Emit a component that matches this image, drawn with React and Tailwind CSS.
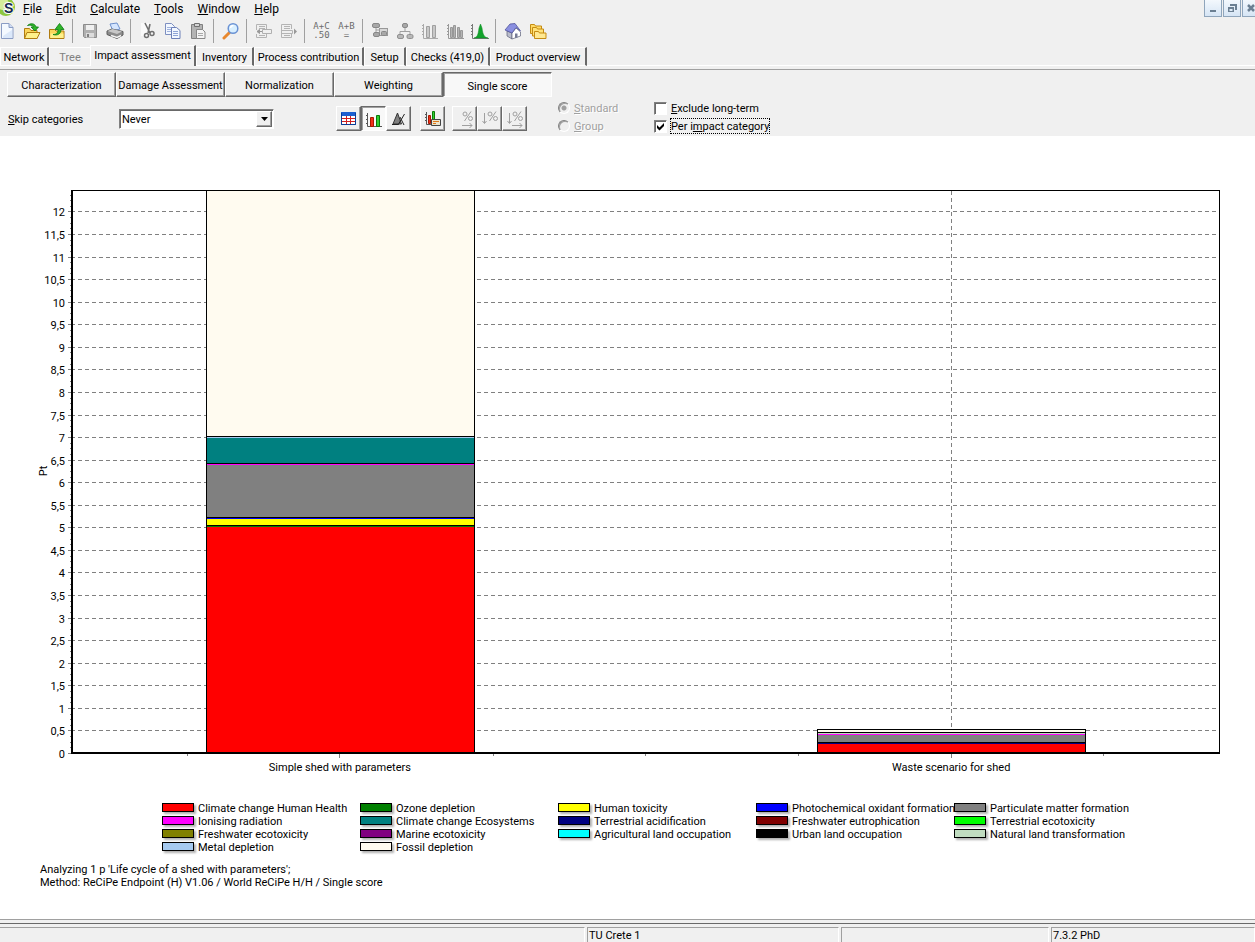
import { useState } from "react";
import { clsx } from "clsx";

const MENUS = ["File", "Edit", "Calculate", "Tools", "Window", "Help"];

const TABS = [
  { id: "network", label: "Network", width: "w-[49px]" },
  { id: "tree", label: "Tree", width: "w-[41px]", disabled: true },
  { id: "impact", label: "Impact assessment", width: "w-[106px]" },
  { id: "inventory", label: "Inventory", width: "w-[58px]" },
  { id: "process", label: "Process contribution", width: "w-[110px]" },
  { id: "setup", label: "Setup", width: "w-[42px]" },
  { id: "checks", label: "Checks (419,0)", width: "w-[84px]" },
  { id: "overview", label: "Product overview", width: "w-[97px]" },
];

const STEPS = ["Characterization", "Damage Assessment", "Normalization", "Weighting", "Single score"];

const LEGEND = [
  ["Climate change Human Health", "bg-[#ff0000]"],
  ["Ozone depletion", "bg-[#008000]"],
  ["Human toxicity", "bg-[#ffff00]"],
  ["Photochemical oxidant formation", "bg-[#0000ff]"],
  ["Particulate matter formation", "bg-[#808080]"],
  ["Ionising radiation", "bg-[#ff00ff]"],
  ["Climate change Ecosystems", "bg-[#008080]"],
  ["Terrestrial acidification", "bg-[#000080]"],
  ["Freshwater eutrophication", "bg-[#800000]"],
  ["Terrestrial ecotoxicity", "bg-[#00ff00]"],
  ["Freshwater ecotoxicity", "bg-[#808000]"],
  ["Marine ecotoxicity", "bg-[#800080]"],
  ["Agricultural land occupation", "bg-[#00ffff]"],
  ["Urban land occupation", "bg-[#000000]"],
  ["Natural land transformation", "bg-[#c0dcc0]"],
  ["Metal depletion", "bg-[#a6caf0]"],
  ["Fossil depletion", "bg-[#fffbf0]"],
];

// Stacks run bottom to top, `to` is the cumulative score in Pt
const BARS = [
  {
    name: "Simple shed with parameters",
    center: 23.4,
    stack: [
      { to: 5.008, fill: "#ff0000" },
      { to: 5.052, fill: "#008000", edge: true },
      { to: 5.185, fill: "#ffff00" },
      { to: 5.229, fill: "#0000ff", edge: true },
      { to: 6.381, fill: "#808080" },
      { to: 6.426, fill: "#ff00ff", edge: true },
      { to: 6.98, fill: "#008080" },
      { to: 7.024, fill: "#a6caf0", edge: true },
      { to: 12.475, fill: "#fffbf0", edge: true },
    ],
  },
  {
    name: "Waste scenario for shed",
    center: 76.6,
    stack: [
      { to: 0.199, fill: "#ff0000" },
      { to: 0.244, fill: "#000080", edge: true },
      { to: 0.399, fill: "#808080" },
      { to: 0.421, fill: "#ff00ff" },
      { to: 0.465, fill: "#c0dcc0", edge: true },
      { to: 0.532, fill: "#fffbf0", edge: true },
    ],
  },
];

const PLOT_HEIGHT = 563;
const PX_PER_PT = 45.13;
const BAR_WIDTH = 23.3;
const STEPS_Y = Array.from({ length: 25 }, (_, i) => i / 2);
const MINOR_Y = Array.from({ length: 99 }, (_, i) => (i + 1) / 8);
const TICKS_X = [10.15, 23.4, 36.75, 50, 63.3, 76.6, 89.9];

const yOf = (v) => Math.round(PLOT_HEIGHT - v * PX_PER_PT);

const raised = "border border-t-white border-l-white border-r-[#696969] border-b-[#696969] shadow-[inset_-1px_-1px_0_#a0a0a0]";
const sunken = "border border-t-[#696969] border-l-[#696969] border-r-white border-b-white shadow-[inset_1px_1px_0_#a0a0a0] bg-[#f8f8f8]";

function Icon({ children, size = 18 }) {
  return (
    <svg width={size} height={size} viewBox={`0 0 ${size} ${size}`} fill="none" className="shrink-0" aria-hidden="true">
      {children}
    </svg>
  );
}

function Accel({ text, at = 0 }) {
  return (
    <span>
      {text.slice(0, at)}
      <u className="underline-offset-1">{text[at]}</u>
      {text.slice(at + 1)}
    </span>
  );
}

const NewIcon = () => (
  <Icon>
    <path d="M3.5 1.5h7.5l4 4v11h-11.5z" fill="#f4f9ff" stroke="#8a9cc4" />
    <path d="M11 1.5v4h4" fill="#cfdcf5" stroke="#8a9cc4" />
    <path d="M5 14l9-6v8H5z" fill="#dbe8fa" />
  </Icon>
);

const OpenIcon = () => (
  <Icon>
    <path d="M1.5 16.5v-10h5l1.5 2h6v8z" fill="#fbd65a" stroke="#b07b10" />
    <path d="M1.5 16.5l2.5-6h13l-3 6z" fill="#fff08a" stroke="#b07b10" />
    <path d="M4.500 3.500C8 .5 12 1.500 13 5h2.500l-3.500 4-4-4h2.500C9.500 3 7 2.800 4.500 3.500z" fill="#2fb52a" stroke="#0b7a10" strokeWidth=".8" />
  </Icon>
);

const SaveUpIcon = () => (
  <Icon>
    <path d="M1.500 16.500v-9h5l1.500 1.500h8v7.500z" fill="#fbd65a" stroke="#b07b10" />
    <path d="M2.500 11.500h13v4.500h-13z" fill="#fff08a" />
    <path d="M5 12.500c4 0 5-2 5-5H7l4.500-6 4.500 6h-3c0 4-3 6.500-8 5z" fill="#2fb52a" stroke="#0b7a10" strokeWidth=".8" />
  </Icon>
);

const DiskIcon = () => (
  <Icon>
    <path d="M2.500 2.500h13v13h-12l-1-1z" fill="#b0b0b0" stroke="#8c8c8c" />
    <path d="M5 3h8v5H5z" fill="#f0f0f0" />
    <path d="M5 11h8v4.500H5z" fill="#dcdcdc" />
    <path d="M6 12h2v3H6z" fill="#808080" />
  </Icon>
);

const PrintIcon = () => (
  <Icon>
    <path d="M4 2l7-1 3 6-7 2z" fill="#d5e6ff" stroke="#6d90cc" />
    <path d="M1 9l5-2 11 2.500v3.500l-6 3.500L1 12.500z" fill="#8c8c8c" stroke="#5c5c5c" />
    <path d="M1.500 9l5-2L16 9.500 11 12z" fill="#c8c8c8" />
    <path d="M5 13.500l6 2 4-2" stroke="#f4f4f4" strokeWidth="1.500" />
  </Icon>
);

const CutIcon = () => (
  <Icon>
    <path d="M2 1h9v13H2z" fill="#fafafa" />
    <path d="M6 1l5 10M11 2l-2 9" stroke="#707070" strokeWidth="1.600" />
    <circle cx="7.500" cy="13.500" r="2" stroke="#707070" strokeWidth="1.500" />
    <circle cx="13" cy="11.500" r="2" stroke="#707070" strokeWidth="1.500" />
  </Icon>
);

const CopyIcon = () => (
  <Icon>
    <path d="M1.500 1.500h6l3 3v8h-9z" fill="#f2f7ff" stroke="#7d8fc0" />
    <path d="M3 5.500h5M3 7.500h5M3 9.500h4" stroke="#9fb2dd" />
    <path d="M7.500 5.500h5l3.500 3v8H7.500z" fill="#f2f7ff" stroke="#6d80b8" />
    <path d="M9 9.500h5M9 11.500h5M9 13.500h5" stroke="#8ea4d6" />
  </Icon>
);

const PasteIcon = () => (
  <Icon>
    <path d="M2.500 2.500h11v14h-11z" fill="#b4b4b4" stroke="#808080" />
    <path d="M5.500 1.500h5v3h-5z" fill="#d4d4d4" stroke="#707070" />
    <path d="M7.500 7.500h6l2.500 2.500v6.500H7.500z" fill="#f4f4f4" stroke="#888" />
    <path d="M9 11.500h5M9 13.500h5" stroke="#aaa" />
  </Icon>
);

const FindIcon = () => (
  <Icon>
    <path d="M8 10l-6 6" stroke="#e8882e" strokeWidth="3" strokeLinecap="round" />
    <circle cx="11" cy="6.500" r="4.800" fill="#d8efff" stroke="#6a92d4" strokeWidth="1.500" />
    <path d="M8.500 6a3 3 0 0 1 3-2.500" stroke="#fff" strokeWidth="1.500" />
  </Icon>
);

const OutdentIcon = () => (
  <Icon>
    <path d="M1.500 8V2.500h10V7M1.500 12v3.500h10V12" stroke="#b4b4b4" />
    <path d="M4 4.500h6M4 6.500h6M4 13.500h6" stroke="#b4b4b4" />
    <path d="M7.500 7.500h9v4h-9z" fill="#f0f0f0" stroke="#b0b0b0" />
    <path d="M7 9.500H2M4.500 7.500L2 9.500l2.500 2z" fill="#999" stroke="#999" />
  </Icon>
);

const IndentIcon = () => (
  <Icon>
    <path d="M1.500 2.500h10V7M11.500 12v3.500h-10v-13M1.500 8.500h11v3h-11" stroke="#b4b4b4" />
    <path d="M4 4.500h6M4 6.500h6M4 13.500h6" stroke="#b4b4b4" />
    <path d="M14 6.500L17 9.500 14 12.500z" fill="#999" />
  </Icon>
);

const ChainIcon = () => (
  <Icon>
    <path d="M5 4v9h3M5 8h7" stroke="#a0a0a0" />
    <rect x="1.500" y="1.500" width="7" height="4" rx="1.500" fill="#a8a8a8" stroke="#888" />
    <rect x="8.500" y="6.500" width="8" height="7" fill="#d8d8d8" stroke="#999" />
    <rect x="2.500" y="10.500" width="6" height="4" rx="1.500" fill="#a8a8a8" stroke="#888" />
    <rect x="10.500" y="9.500" width="5" height="4" rx="1" fill="#a8a8a8" stroke="#888" />
  </Icon>
);

const TreeIcon = () => (
  <Icon>
    <path d="M9 5v4M4 12V9.500h10V12" stroke="#a0a0a0" />
    <rect x="6.500" y="1.500" width="5" height="4" rx="1.500" fill="#a8a8a8" stroke="#888" />
    <rect x="1.500" y="12.500" width="6" height="4" rx="1.500" fill="#b8b8b8" stroke="#909090" />
    <rect x="11" y="12.500" width="6" height="4" rx="1.500" fill="#b8b8b8" stroke="#909090" />
  </Icon>
);

const BarsIcon = () => (
  <Icon>
    <path d="M2.500 2v14.500H17M1 3.500h1M1 6.500h1M1 9.500h1M1 12.500h1" stroke="#aaa" />
    <path d="M5.500 4.500h3v11h-3zM11.500 3.500h3v12h-3z" fill="#c8c8c8" stroke="#a0a0a0" />
  </Icon>
);

const HistogramIcon = () => (
  <Icon>
    <path d="M2.500 2v14.500H18M1 3.500h1M1 6.500h1M1 9.500h1M1 12.500h1" stroke="#999" />
    <path d="M4.500 5.500h2v10h-2zM7.500 3.500h2v12h-2zM11.500 5.500h2v10h-2zM14.500 8.500h2v7h-2z" fill="#b4b4b4" stroke="#989898" />
  </Icon>
);

const CurveIcon = () => (
  <Icon>
    <path d="M1.500 2v14.500H18M0 3.500h1M0 6.500h1M0 9.500h1M0 12.500h1" stroke="#777" />
    <path d="M3 16c3.500-1 4-3 5-10l1.500-4L11 6c1 7 2 9 6 10z" fill="#12a32c" stroke="#0b8a20" strokeWidth=".5" />
  </Icon>
);

const HomeIcon = () => (
  <Icon>
    <path d="M3 9l5 2v6l-5-3z" fill="#b9bccb" stroke="#5c6078" strokeWidth=".7" />
    <path d="M8 11l4-5 4.500 4v4L8 17z" fill="#fff" stroke="#5c6078" strokeWidth=".7" />
    <path d="M1 8L6 2l5-.5L16.500 9 12 5.500 8 11z" fill="#8a8fe0" stroke="#50549c" strokeWidth=".8" />
    <path d="M11 11.500h2.500v4l-2.500.5z" fill="#777c95" />
  </Icon>
);

const FoldersIcon = () => (
  <Icon>
    <path d="M1.500 11.500v-9h4l1 1.500h6v8z" fill="#ffdb66" stroke="#c58b12" />
    <path d="M3.500 14v-8.500h4l1 1.500h6v7z" fill="#ffe27a" stroke="#c58b12" />
    <path d="M5.500 16.500v-7h4l1 1.500h6.500v5.500z" fill="#ffe992" stroke="#c58b12" />
  </Icon>
);

const AcIcon = () => (
  <span className="flex flex-col items-center font-['DejaVu_Sans_Mono',monospace] text-[9px] leading-[9px] text-[#6d6d6d]">
    <span>A+C</span>
    <span className="self-end">.50</span>
  </span>
);

const AbIcon = () => (
  <span className="flex flex-col items-center font-['DejaVu_Sans_Mono',monospace] text-[9px] leading-[9px] text-[#6d6d6d]">
    <span>A+B</span>
    <span>=</span>
  </span>
);

const TOOLS = [
  [["New", NewIcon], ["Open", OpenIcon], ["Store", SaveUpIcon]],
  [["Save", DiskIcon], ["Print", PrintIcon]],
  [["Cut", CutIcon], ["Copy", CopyIcon], ["Paste", PasteIcon]],
  [["Find", FindIcon]],
  [["Move left", OutdentIcon], ["Move right", IndentIcon]],
  [["Parameters", AcIcon], ["Calculate sum", AbIcon]],
  [["Network", ChainIcon], ["Tree", TreeIcon], ["Analyze", BarsIcon], ["Compare", HistogramIcon], ["Uncertainty", CurveIcon]],
  [["Home", HomeIcon], ["Projects", FoldersIcon]],
];

function MenuBar() {
  return (
    <header className="flex h-[17px]">
      <svg width="16" height="17" viewBox="0 0 16 17" className="shrink-0" aria-hidden="true">
        <circle cx="6" cy="7" r="9" fill="#8ec63f" />
        <circle cx="3" cy="4" r="6" fill="#d5ec9a" />
        <text x="4" y="13" fontFamily="Liberation Sans, sans-serif" fontSize="14" fontWeight="700" fill="#14284f" stroke="#fff" strokeWidth="2" paintOrder="stroke">
          S
        </text>
      </svg>
      <nav className="flex text-[12px] leading-[16px]">
        {MENUS.map((m) => (
          <button key={m} className="px-[7px]">
            <Accel text={m} />
          </button>
        ))}
      </nav>
      <div className="-mr-[5px] ml-auto flex gap-px">
        {[
          ["Minimize", <path key="p" d="M5 10h6v2H5z" fill="#6b7f92" />],
          ["Restore", <path key="p" d="M6 4h7v6h-2V6H6zM4 7h6v5H4zM5.500 9v2h3V9z" fillRule="evenodd" fill="#6b7f92" />],
          ["Close", <path key="p" d="M5 5l6 6M11 5l-6 6" stroke="#6b7f92" strokeWidth="2.500" />],
        ].map(([name, glyph]) => (
          <button
            key={name}
            aria-label={name}
            className="flex w-[18px] justify-center border border-t-0 border-[#8fa5bb] bg-linear-to-b from-[#f3f8fd] to-[#d6e5f5]"
          >
            <Icon size={16}>{glyph}</Icon>
          </button>
        ))}
      </div>
    </header>
  );
}

function Toolbar() {
  return (
    <div role="toolbar" className="-ml-1.5 flex h-7 items-center">
      {TOOLS.map((group, i) => (
        <div key={i} className="flex items-center">
          {i > 0 && <span className="mr-1 ml-[3px] h-6 w-px self-start bg-[#a0a0a0]" />}
          {group.map(([name, Glyph]) => (
            <button key={name} aria-label={name} className="flex h-6 w-[25px] items-center justify-center">
              <Glyph />
            </button>
          ))}
        </div>
      ))}
    </div>
  );
}

function Tabs() {
  const [active, setActive] = useState("impact");
  return (
    <div role="tablist" className="flex h-[21px] items-end">
      {TABS.map((t) => (
        <button
          key={t.id}
          role="tab"
          aria-selected={active === t.id}
          disabled={t.disabled}
          onClick={() => setActive(t.id)}
          className={clsx(
            "shrink-0 whitespace-nowrap border-t border-l border-white text-center",
            t.width,
            active === t.id ? "h-[21px] border-r-2 border-r-[#696969]" : "h-[19px] border-b pt-0.5",
            t.disabled ? "text-[#808080]" : active !== t.id && "border-r-2 border-r-[#696969]"
          )}
        >
          {t.label}
        </button>
      ))}
      <div className="flex-1 border-b border-white" />
    </div>
  );
}

function StepButtons() {
  const [step, setStep] = useState("Single score");
  return (
    <div className="flex pl-[7px]">
      {STEPS.map((s) => (
        <button
          key={s}
          aria-pressed={step === s}
          onClick={() => setStep(s)}
          className={clsx("h-[25px] w-[109px] whitespace-nowrap", step === s ? clsx(sunken, "pt-1.5") : clsx(raised, "pt-1"))}
        >
          {s}
        </button>
      ))}
    </div>
  );
}

function ViewButton({ label, pressed, disabled, children }) {
  return (
    <button
      aria-label={label}
      aria-pressed={pressed}
      disabled={disabled}
      className={clsx("flex h-[25px] w-[25px] items-center justify-center", pressed ? sunken : raised)}
    >
      {children}
    </button>
  );
}

function PercentGlyph({ children }) {
  return (
    <Icon>
      <g stroke="#a0a0a0">
        <circle cx="9" cy="4" r="2" />
        <circle cx="14.500" cy="8.500" r="2" />
        <path d="M15 1.500l-6.500 9.500" />
        {children}
      </g>
    </Icon>
  );
}

function ViewButtons() {
  return (
    <div className="flex">
      <ViewButton label="Table">
        <Icon>
          <path d="M1.500 3.500h14v11h-14z" fill="#fff" stroke="#0a3c96" />
          <path d="M2 8.500h13M2 11.500h13M6.500 6v8M10.500 6v8" stroke="#d02020" />
          <path d="M1 2h15v4H1z" fill="#1c5fd0" />
          <path d="M1.500 3v11.500h14V3" stroke="#0a3c96" />
        </Icon>
      </ViewButton>
      <ViewButton label="Bar chart" pressed>
        <Icon>
          <path d="M2.500 3v13.500H17M1 5.500h1M1 9.500h1M1 13.500h1" stroke="#555" />
          <path d="M5.500 7.500h3v9h-3z" fill="#f03018" stroke="#a81800" />
          <path d="M11.500 5.500h3v11h-3z" fill="#30d030" stroke="#0a7a0a" />
        </Icon>
      </ViewButton>
      <ViewButton label="Triangle chart">
        <Icon>
          <path d="M7.500 3l4 11H3z" fill="#808080" stroke="#333" />
          <path d="M14.500 4L8 15M10 7l4 8M2 14.500h6" stroke="#222" />
        </Icon>
      </ViewButton>
      <span className="w-[9px]" />
      <ViewButton label="Chart options">
        <Icon>
          <path d="M2.500 2v12.500H8M1 4.500h1M1 7.500h1M1 10.500h1" stroke="#555" />
          <path d="M4.500 5.500h2v8h-2z" fill="#f03018" stroke="#a81800" />
          <path d="M8.500 1.500h2v9h-2z" fill="#30d030" stroke="#0a7a0a" />
          <path d="M7.500 9.500h9v6h-9z" fill="#ece4cc" stroke="#444" />
          <path d="M9 11.500h6M9 13.500h3" stroke="#e07818" />
        </Icon>
      </ViewButton>
      <span className="w-[7px]" />
      <ViewButton label="Scale to 100%" disabled>
        <PercentGlyph>
          <path d="M6 15.500h10M13.500 13l2.500 2.500-2.500 2.500" />
        </PercentGlyph>
      </ViewButton>
      <ViewButton label="Sort by percentage" disabled>
        <PercentGlyph>
          <path d="M3.500 3v10M1.500 11l2 2.500 2-2.500" />
        </PercentGlyph>
      </ViewButton>
      <ViewButton label="Sort and scale" disabled>
        <PercentGlyph>
          <path d="M3.500 3v10M1.500 11l2 2.500 2-2.500M6 15.500h10M13.500 13l2.500 2.500-2.500 2.500" />
        </PercentGlyph>
      </ViewButton>
    </div>
  );
}

function Radio({ label, checked }) {
  return (
    <label className="flex h-[18px] items-center gap-1 text-[#a0a0a0] [text-shadow:1px_1px_0_#fff]">
      <input
        type="radio"
        name="mode"
        disabled
        defaultChecked={checked}
        className="h-3 w-3 appearance-none rounded-full border border-t-[#808080] border-r-white border-b-white border-l-[#808080] bg-[#f0f0f0] bg-[radial-gradient(circle,#a0a0a0_2px,transparent_3px)] bg-size-[0_0] bg-center bg-no-repeat shadow-[inset_1px_1px_0_#a0a0a0] checked:bg-size-[10px_10px]"
      />
      <span className="pt-0.5">
        <Accel text={label} />
      </span>
    </label>
  );
}

function CheckBox({ label, at, checked, focused }) {
  return (
    <label className="flex h-[18px] items-center gap-1">
      <span className="grid h-[13px] w-[13px] shrink-0">
        <input
          type="checkbox"
          defaultChecked={checked}
          className="peer col-start-1 row-start-1 h-[13px] w-[13px] appearance-none border border-t-[#808080] border-r-white border-b-white border-l-[#808080] bg-white shadow-[inset_1px_1px_0_#696969]"
        />
        <svg viewBox="0 0 13 13" className="pointer-events-none invisible col-start-1 row-start-1 peer-checked:visible" aria-hidden="true">
          <path d="M3 5l2.500 2.500L10 3v3L5.500 10.500 3 8z" fill="#000" />
        </svg>
      </span>
      <span className={clsx("pt-0.5 leading-[12px]", focused && "outline-1 outline-dotted outline-black")}>
        <Accel text={label} at={at} />
      </span>
    </label>
  );
}

function Options() {
  return (
    <div className="flex h-[39px] items-start pt-0.5 pl-2">
      <label htmlFor="skip" className="w-[111px] pt-[13px] leading-4">
        <Accel text="Skip categories" />
      </label>
      <div className="relative mt-2.5 w-[155px]">
        <select
          id="skip"
          defaultValue="Never"
          className="block h-5 w-full appearance-none border border-t-[#808080] border-r-white border-b-white border-l-[#808080] bg-white pt-0.5 pl-0.5 shadow-[inset_1px_1px_0_#696969]"
        >
          <option>Never</option>
          <option>Always</option>
        </select>
        <span className={clsx("pointer-events-none absolute top-0.5 right-0.5 flex h-4 w-4 items-center justify-center bg-[#f0f0f0]", raised)}>
          <svg width="7" height="4" viewBox="0 0 7 4" aria-hidden="true">
            <path d="M0 0h7L3.500 4z" fill="#000" />
          </svg>
        </span>
      </div>
      <div className="mt-[7px] ml-[62px]">
        <ViewButtons />
      </div>
      <div className="ml-[31px] w-24">
        <Radio label="Standard" checked />
        <Radio label="Group" />
      </div>
      <div>
        <CheckBox label="Exclude long-term" at={0} />
        <CheckBox label="Per impact category" at={5} checked focused />
      </div>
    </div>
  );
}

function Bar({ center, stack }) {
  const left = center - BAR_WIDTH / 2;
  const top = yOf(stack[stack.length - 1].to);
  return (
    <g>
      {stack.map((s, i) => {
        const y = yOf(s.to);
        const bottom = i === 0 ? PLOT_HEIGHT : yOf(stack[i - 1].to);
        return <rect key={i} x={`${left}%`} y={y} width={`${BAR_WIDTH}%`} height={bottom - y} fill={s.fill} />;
      })}
      <g fill="#000">
        {stack
          .filter((s) => s.edge)
          .map((s) => (
            <rect key={s.to} x={`${left}%`} y={yOf(s.to)} width={`${BAR_WIDTH}%`} height="1" />
          ))}
        <rect x={`${left}%`} y={top} width="1" height={PLOT_HEIGHT - top} />
        <rect x={`${left + BAR_WIDTH}%`} y={top} width="1" height={PLOT_HEIGHT - top} />
      </g>
    </g>
  );
}

function Chart() {
  return (
    <div className="flex pr-[35px]">
      <svg width="71" height="590" className="shrink-0 overflow-visible text-[11px]">
        <text transform="translate(47 281) rotate(-90)" textAnchor="middle">
          Pt
        </text>
        <g shapeRendering="crispEdges" fill="#808080">
          {MINOR_Y.map((v) => (
            <rect key={v} x="70" y={yOf(v)} width="1" height="1" />
          ))}
          {STEPS_Y.map((v) => (
            <rect key={v} x="68" y={yOf(v)} width="3" height="1" />
          ))}
        </g>
        {STEPS_Y.map((v) => (
          <text key={v} x="65" y={yOf(v) + 5} textAnchor="end">
            {String(v).replace(".", ",")}
          </text>
        ))}
      </svg>
      <svg height="590" className="min-w-0 flex-1 text-[11px]">
        <g shapeRendering="crispEdges">
          <g stroke="#808080" strokeDasharray="4 3">
            {STEPS_Y.slice(1).map((v) => (
              <line key={v} x1="0" x2="100%" y1={yOf(v) + 0.5} y2={yOf(v) + 0.5} />
            ))}
            {BARS.map((b) => (
              <line key={b.name} x1={`${b.center}%`} x2={`${b.center}%`} y1="1" y2={PLOT_HEIGHT} />
            ))}
          </g>
          {BARS.map((b) => (
            <Bar key={b.name} {...b} />
          ))}
          {TICKS_X.map((x, i) => (
            <line key={x} x1={`${x}%`} x2={`${x}%`} y1={PLOT_HEIGHT} y2={i === 1 || i === 5 ? 568 : 566} stroke="#808080" />
          ))}
          <rect width="100%" height="1" fill="#000" />
          <rect width="2" height={PLOT_HEIGHT} fill="#000" />
          <rect y={PLOT_HEIGHT - 1} width="100%" height="2" fill="#000" />
          <svg x="100%" width="1" height={PLOT_HEIGHT} className="overflow-visible">
            <rect x="-1" width="1" height={PLOT_HEIGHT} fill="#000" />
          </svg>
        </g>
        {BARS.map((b) => (
          <text key={b.name} x={`${b.center}%`} y="581" textAnchor="middle">
            {b.name}
          </text>
        ))}
      </svg>
    </div>
  );
}

function Legend() {
  return (
    <ul className="mt-[21px] mr-[35px] ml-[71px] grid grid-cols-[repeat(4,198px)_175px] justify-center">
      {LEGEND.map(([name, color]) => (
        <li key={name} className="flex h-[13px] items-center gap-1 leading-[13px] whitespace-nowrap">
          <span className={clsx("h-[9px] w-8 shrink-0 border border-black shadow-[2px_2px_2px_#b0b0b0]", color)} />
          <span className="pt-0.5">{name}</span>
        </li>
      ))}
    </ul>
  );
}

function StatusBar() {
  const cell = "border-t border-l border-[#a0a0a0] border-r border-r-white pl-px leading-[16px]";
  return (
    <footer className="border-t border-[#a0a0a0] bg-[#f0f0f0]">
      <div className="mt-[3px] flex h-[19px] gap-0.5 border-t border-[#696969] pt-[3px]">
        <div className={clsx(cell, "w-[585px] border-l-0")} />
        <div className={clsx(cell, "w-[252px]")}>TU Crete 1</div>
        <div className={clsx(cell, "w-[208px]")} />
        <div className={clsx(cell, "flex-1")}>7.3.2 PhD</div>
      </div>
    </footer>
  );
}

export default function App() {
  return (
    <div className="flex min-h-screen flex-col overflow-x-hidden bg-[#f0f0f0] font-['Roboto',Tahoma,sans-serif] text-[11px] text-black">
      <MenuBar />
      <Toolbar />
      <Tabs />
      <div className="mt-[3px] border-t border-[#a0a0a0] pt-0.5">
        <StepButtons />
        <Options />
      </div>
      <main className="flex-1 bg-white pt-[54px] pb-7">
        <Chart />
        <Legend />
        <div className="mt-2.5 pl-10 leading-[13px]">
          <p>Analyzing 1 p 'Life cycle of a shed with parameters';</p>
          <p>Method: ReCiPe Endpoint (H) V1.06 / World ReCiPe H/H / Single score</p>
        </div>
      </main>
      <StatusBar />
    </div>
  );
}
